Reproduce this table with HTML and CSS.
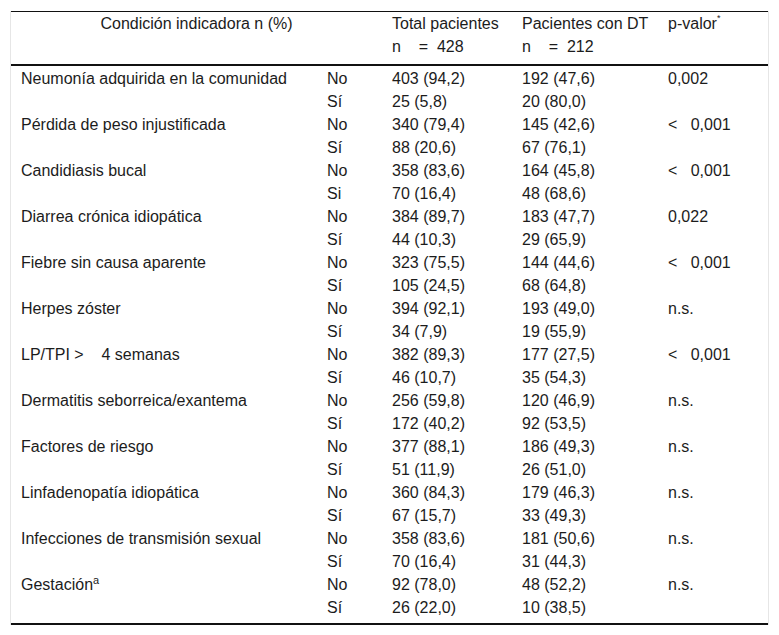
FILE: index.html
```html
<!DOCTYPE html>
<html lang="es">
<head>
<meta charset="utf-8">
<title>Condición indicadora</title>
<link rel="stylesheet" href="styles.css">
</head>
<body>
<div class="wrap">
<table class="tbl">
  <colgroup>
    <col class="c1"><col class="c2"><col class="c3"><col class="c4"><col class="c5">
  </colgroup>
  <thead>
    <tr>
      <th colspan="2" class="center">Condición indicadora n (%)</th>
      <th>Total pacientes<br><span class="pre">n    =  428</span></th>
      <th>Pacientes con DT<br><span class="pre">n    =  212</span></th>
      <th>p-valor<sup class="ast">*</sup></th>
    </tr>
  </thead>
  <tbody>
    <tr class="first"><td>Neumonía adquirida en la comunidad</td><td>No</td><td>403 (94,2)</td><td>192 (47,6)</td><td>0,002</td></tr>
    <tr><td></td><td>Sí</td><td>25 (5,8)</td><td>20 (80,0)</td><td></td></tr>
    <tr><td>Pérdida de peso injustificada</td><td>No</td><td>340 (79,4)</td><td>145 (42,6)</td><td class="pre">&lt;   0,001</td></tr>
    <tr><td></td><td>Sí</td><td>88 (20,6)</td><td>67 (76,1)</td><td></td></tr>
    <tr><td>Candidiasis bucal</td><td>No</td><td>358 (83,6)</td><td>164 (45,8)</td><td class="pre">&lt;   0,001</td></tr>
    <tr><td></td><td>Si</td><td>70 (16,4)</td><td>48 (68,6)</td><td></td></tr>
    <tr><td>Diarrea crónica idiopática</td><td>No</td><td>384 (89,7)</td><td>183 (47,7)</td><td>0,022</td></tr>
    <tr><td></td><td>Sí</td><td>44 (10,3)</td><td>29 (65,9)</td><td></td></tr>
    <tr><td>Fiebre sin causa aparente</td><td>No</td><td>323 (75,5)</td><td>144 (44,6)</td><td class="pre">&lt;   0,001</td></tr>
    <tr><td></td><td>Sí</td><td>105 (24,5)</td><td>68 (64,8)</td><td></td></tr>
    <tr><td>Herpes zóster</td><td>No</td><td>394 (92,1)</td><td>193 (49,0)</td><td>n.s.</td></tr>
    <tr><td></td><td>Sí</td><td>34 (7,9)</td><td>19 (55,9)</td><td></td></tr>
    <tr><td class="pre">LP/TPI &gt;    4 semanas</td><td>No</td><td>382 (89,3)</td><td>177 (27,5)</td><td class="pre">&lt;   0,001</td></tr>
    <tr><td></td><td>Sí</td><td>46 (10,7)</td><td>35 (54,3)</td><td></td></tr>
    <tr><td>Dermatitis seborreica/exantema</td><td>No</td><td>256 (59,8)</td><td>120 (46,9)</td><td>n.s.</td></tr>
    <tr><td></td><td>Sí</td><td>172 (40,2)</td><td>92 (53,5)</td><td></td></tr>
    <tr><td>Factores de riesgo</td><td>No</td><td>377 (88,1)</td><td>186 (49,3)</td><td>n.s.</td></tr>
    <tr><td></td><td>Sí</td><td>51 (11,9)</td><td>26 (51,0)</td><td></td></tr>
    <tr><td>Linfadenopatía idiopática</td><td>No</td><td>360 (84,3)</td><td>179 (46,3)</td><td>n.s.</td></tr>
    <tr><td></td><td>Sí</td><td>67 (15,7)</td><td>33 (49,3)</td><td></td></tr>
    <tr><td>Infecciones de transmisión sexual</td><td>No</td><td>358 (83,6)</td><td>181 (50,6)</td><td>n.s.</td></tr>
    <tr><td></td><td>Sí</td><td>70 (16,4)</td><td>31 (44,3)</td><td></td></tr>
    <tr><td>Gestación<sup class="sup-a">a</sup></td><td>No</td><td>92 (78,0)</td><td>48 (52,2)</td><td>n.s.</td></tr>
    <tr class="last"><td></td><td>Sí</td><td>26 (22,0)</td><td>10 (38,5)</td><td></td></tr>
  </tbody>
</table>
</div>
</body>
</html>
```

FILE: styles.css
```css
html, body {
  margin: 0;
  padding: 0;
  background: #ffffff;
}

body {
  font-family: "Liberation Sans", Arial, sans-serif;
  font-size: 16px;
  color: #1c1c1c;
}

.wrap {
  margin: 11px 10px 0 10px;
  border-left: 1px solid #e6e6e6;
  border-right: 1px solid #e6e6e6;
}

.tbl {
  width: 100%;
  border-collapse: collapse;
  table-layout: fixed;
  border-top: 1px solid #111;
  border-bottom: 2px solid #111;
}

.c1 { width: 306px; }
.c2 { width: 65px; }
.c3 { width: 130px; }
.c4 { width: 146px; }
.c5 { width: auto; }

.tbl th {
  font-weight: normal;
  text-align: left;
  vertical-align: top;
  line-height: 23px;
  padding: 0 10px 6px 10px;
  border-bottom: 2px solid #111;
  white-space: nowrap;
}

.tbl th.center {
  text-align: center;
}

.tbl td {
  padding: 0 10px;
  line-height: 23px;
  vertical-align: top;
  white-space: nowrap;
}

.tbl tr.first td {
  padding-top: 1px;
}

.tbl tr.last td {
  padding-bottom: 4px;
}

.tbl .pre {
  white-space: pre;
}

.ast {
  font-size: 9px;
  line-height: 0;
  vertical-align: 8px;
}

.sup-a {
  font-size: 11px;
  line-height: 0;
  vertical-align: 6px;
}
```
